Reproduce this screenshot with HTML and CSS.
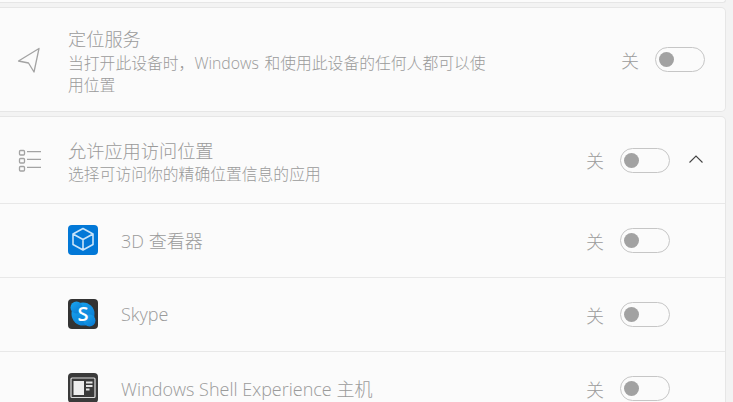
FILE: index.html
```html
<!DOCTYPE html>
<html lang="zh-CN">
<head>
    <meta charset="UTF-8">
    <meta name="viewport" content="width=device-width, initial-scale=1.0">
    <title>定位服务</title>
    <link rel="stylesheet" href="styles.css">
</head>
<body>
    <div class="top-card"></div>

    <div class="card">
        <div class="row row-main">
            <svg class="row-icon" width="24" height="26" viewBox="0 0 24 26">
                <path d="M22 1.500 L1.500 14 L11.500 16 L17 25 Z" fill="none" stroke="#a3a3a3" stroke-width="1.300" stroke-linejoin="round"/>
            </svg>
            <div class="row-text">
                <div class="title">定位服务</div>
                <div class="desc">当打开此设备时，Windows 和使用此设备的任何人都可以使用位置</div>
            </div>
            <span class="state">关</span>
            <div class="toggle"><div class="knob"></div></div>
        </div>
    </div>

    <div class="card">
        <div class="row row-head">
            <svg class="row-icon" width="24" height="24" viewBox="0 0 24 24">
                <g fill="none" stroke="#a3a3a3" stroke-width="1.300">
                    <rect x="1.500" y="2.500" width="5" height="4.500" rx="1"/>
                    <rect x="1.500" y="10.500" width="5" height="4.500" rx="1"/>
                    <rect x="1.500" y="18.500" width="5" height="4.500" rx="1"/>
                    <path d="M9 3.700 H23 M9 11.300 H23 M9 19.300 H23"/>
                </g>
            </svg>
            <div class="row-text">
                <div class="title">允许应用访问位置</div>
                <div class="desc">选择可访问你的精确位置信息的应用</div>
            </div>
            <span class="state">关</span>
            <div class="toggle"><div class="knob"></div></div>
            <svg class="chevron" width="16" height="10" viewBox="0 0 16 10">
                <path d="M1.500 8.500 L8 2 L14.500 8.500" fill="none" stroke="#444" stroke-width="1.100"/>
            </svg>
        </div>

        <div class="row app-row">
            <svg class="app-icon" width="30" height="30" viewBox="0 0 30 30">
                <rect width="30" height="30" rx="4" fill="#0278d7"/>
                <path d="M15 3.500 L25 9 V19.500 L15 25 L5 19.500 V9 Z M5 9 L15 14.500 L25 9 M15 14.500 V25" fill="none" stroke="#c9e4f9" stroke-width="1.600" stroke-linejoin="round"/>
            </svg>
            <span class="app-name">3D 查看器</span>
            <span class="state">关</span>
            <div class="toggle"><div class="knob"></div></div>
        </div>

        <div class="row app-row">
            <svg class="app-icon" width="30" height="30" viewBox="0 0 30 30">
                <defs>
                    <linearGradient id="skype-blue" x1="0" y1="0" x2="0.800" y2="1">
                        <stop offset="0" stop-color="#1aa9f2"/>
                        <stop offset="1" stop-color="#0a7ad2"/>
                    </linearGradient>
                </defs>
                <rect width="30" height="30" rx="4" fill="#333"/>
                <circle cx="15" cy="15" r="11.500" fill="url(#skype-blue)"/>
                <circle cx="8.500" cy="8.500" r="6" fill="url(#skype-blue)"/>
                <circle cx="21.500" cy="21.500" r="6" fill="url(#skype-blue)"/>
                <text x="15" y="22" class="skype-s">S</text>
            </svg>
            <span class="app-name">Skype</span>
            <span class="state">关</span>
            <div class="toggle"><div class="knob"></div></div>
        </div>

        <div class="row app-row">
            <svg class="app-icon" width="30" height="30" viewBox="0 0 30 30">
                <rect width="30" height="30" rx="4" fill="#3a3a3a"/>
                <rect x="3" y="5" width="24" height="19.500" rx="1" fill="#3a3a3a" stroke="#dcdcdc" stroke-width="1.200"/>
                <rect x="5.500" y="8" width="10.500" height="14" fill="#eeeeee"/>
                <path d="M18 9.500 H24.500 M18 13 H24.500 M18 16.500 H21.500" stroke="#e6e6e6" stroke-width="2"/>
            </svg>
            <span class="app-name">Windows Shell Experience 主机</span>
            <span class="state">关</span>
            <div class="toggle"><div class="knob"></div></div>
        </div>
    </div>
</body>
</html>
```

FILE: styles.css
```css
html, body {
    height: 100%;
    overflow: hidden;
}
body {
    background-color: #f3f3f3;
    font-family: 'Open Sans', 'Noto Sans CJK SC', sans-serif;
    color: #9a9a9a;
    margin: 0;
    padding: 0 7px 0 0;
    display: flex;
    flex-direction: column;
    gap: 4px;
    box-sizing: border-box;
}
.top-card, .card {
    background-color: #fbfbfb;
    border: 1px solid #e6e6e6;
    border-left: none;
    border-radius: 0 5px 5px 0;
    flex: none;
}
.top-card {
    height: 2px;
    border-top: none;
    border-radius: 0 0 5px 0;
}
.row {
    display: flex;
    align-items: center;
    padding-right: 20px;
}
.row-main {
    height: 103px;
    padding-left: 17px;
}
.row-head {
    height: 86px;
    padding-left: 18px;
    padding-right: 21px;
}
.app-row {
    height: 73px;
    border-top: 1px solid #e8e8e8;
    padding-left: 68px;
    padding-right: 55px;
}
.row-icon {
    flex: none;
}
.row-main .row-icon {
    margin-right: 27px;
    margin-top: 1px;
}
.row-head .row-icon {
    margin-right: 26px;
}
.row-text {
    flex: 1;
    min-width: 0;
}
.row-main .row-text {
    margin-top: 4px;
}
.row-head .row-text {
    margin-top: 4px;
}
.row-main .title {
    margin-bottom: 1px;
}
.title {
    font-size: 18.200px;
    line-height: 24px;
    font-weight: 300;
}
.desc {
    font-size: 15.800px;
    line-height: 22px;
    font-weight: 300;
    max-width: 425px;
    word-spacing: 1.500px;
}
.app-icon {
    flex: none;
    margin-right: 23px;
    margin-top: -1px;
}
.app-name {
    flex: 1;
    font-size: 18px;
    font-weight: 300;
    margin-top: -1px;
}
.state {
    font-size: 18px;
    font-weight: 300;
    margin-right: 16px;
}
.toggle {
    width: 50px;
    height: 25px;
    box-sizing: border-box;
    border: 1.500px solid #c6c6c6;
    border-radius: 13px;
    display: flex;
    align-items: center;
    padding-left: 3px;
    flex: none;
}
.knob {
    width: 15px;
    height: 15px;
    border-radius: 50%;
    background-color: #a2a2a2;
}
.chevron {
    flex: none;
    margin-left: 18px;
    margin-top: -2px;
}
.skype-s {
    font-family: 'Open Sans', sans-serif;
    font-size: 20px;
    font-weight: 600;
    fill: #fff;
    text-anchor: middle;
}
```
